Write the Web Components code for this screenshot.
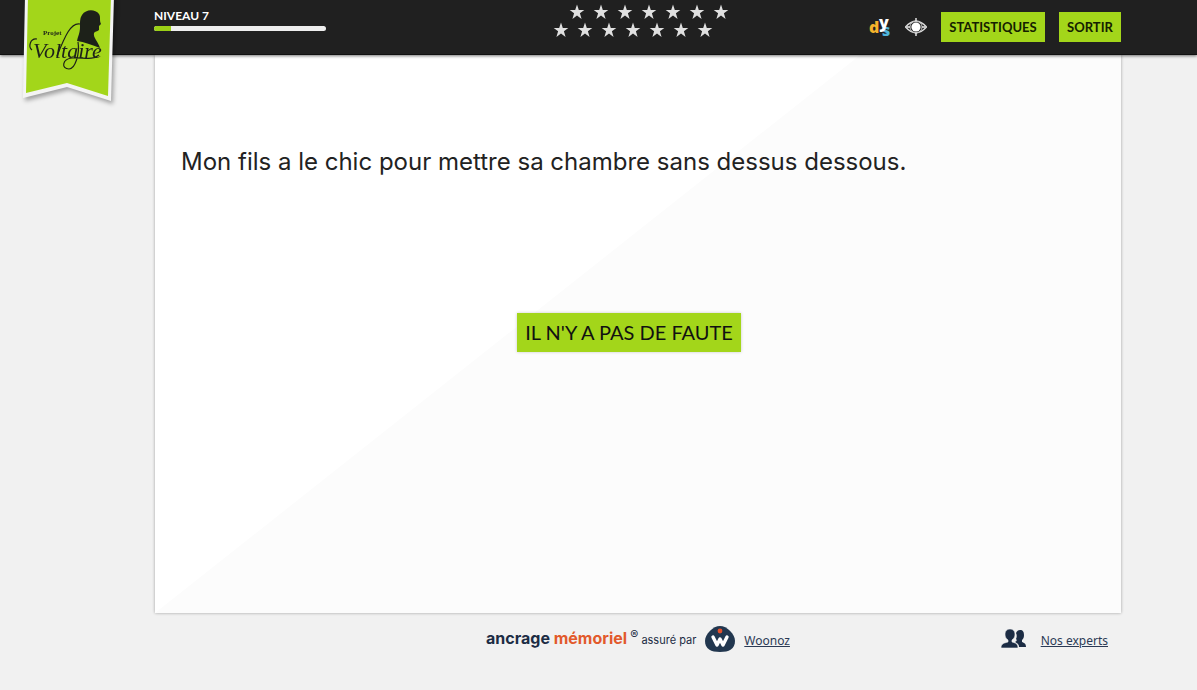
<!DOCTYPE html>
<html lang="fr">
<head>
<meta charset="utf-8">
<title>Projet Voltaire</title>
<style>
html, body { height: 100%; }
body { margin: 0; background: #f1f1f1; color: #222; font-family: Inter, "Liberation Sans", sans-serif; }
</style>
</head>
<body>
<voltaire-app></voltaire-app>
<script>
function define(name, html) {
  const template = document.createElement('template');
  template.innerHTML = html;
  customElements.define(name, class extends HTMLElement {
    constructor() {
      super();
      this.attachShadow({ mode: 'open' }).append(template.content.cloneNode(true));
    }
  });
}

define('brand-ribbon', `
<style>
:host { display: block; width: 100px; }
svg { display: block; overflow: visible; filter: drop-shadow(2px 3px 2px #0005); }
</style>
<svg width="100" height="110" viewBox="18 0 100 110" role="img" aria-label="Projet Voltaire">
  <path d="M25 -4H114L111 101L67 87L23 98Z" fill="#f4f4f4"/>
  <path d="M28 -4H111L108 96L67 83L26 93Z" fill="#a3d61a"/>
  <path d="M82 15C86 9 95 9 99 14C101 17 99 20 101 24L99 26L99 30C97 32 95 31 94 33C93 38 98 41 100 48C92 45 84 42 77 41C78 36 80 33 80 27C80 21 80 18 82 15Z" fill="#1d2119"/>
  <text x="43" y="35" font-family="Liberation Serif, serif" font-size="7" font-weight="bold" fill="#1d2119">Projet</text>
  <text x="33" y="58" font-family="Liberation Serif, serif" font-size="22" font-style="italic" fill="#1d2119">Voltaire</text>
  <path d="M37 39C30 38 28 47 32 50M80 24C71 22 65 36 57 56M78 42C80 54 75 69 69 69C61 69 62 59 72 58C83 57 92 61 99 55" fill="none" stroke="#1d2119" stroke-width="1.2"/>
</svg>`);

define('level-meter', `
<style>
:host { display: block; font: 700 12px/15px Lato, "Liberation Sans", sans-serif; color: #fff; }
label { display: block; margin-bottom: 3px; }
progress { display: block; width: 172px; height: 5px; border: 0; border-radius: 3px; overflow: hidden; appearance: none; background: #eee; }
progress::-webkit-progress-bar { background: #eee; }
progress::-webkit-progress-value { background: #9bd016; }
</style>
<label for="level"><slot></slot></label>
<progress id="level" max="100" value="10"></progress>`);

const star = '<svg viewBox="0 0 16 16" aria-hidden="true"><path d="M8 .5L9.8 6H15.3L10.9 9.3L12.6 15L8 11.6L3.4 15L5.1 9.3L.7 6H6.2Z"/></svg>';
define('star-row', `
<style>
:host { display: flex; gap: 8px; }
svg { width: 16px; height: 16px; fill: #e0e0e0; }
</style>${star.repeat(7)}`);

define('dys-toggle', `
<style>
:host { display: block; }
button { display: block; border: 0; padding: 0; background: none; overflow: visible; }
svg { display: block; overflow: visible; }
text { font: 800 16px "Open Sans", sans-serif; }
</style>
<button type="button" aria-label="Affichage dys"><svg width="24" height="24" viewBox="0 0 24 24">
<text x="0" y="18" fill="#f4b32c">d</text><text x="13" y="21" fill="#4fb5dc">s</text><text x="10" y="13" fill="#fff">y</text>
</svg></button>`);

define('eye-toggle', `
<style>
:host { display: block; }
button { display: block; border: 0; padding: 0; background: none; }
svg { display: block; }
</style>
<button type="button" aria-label="Contraste"><svg width="22" height="20" viewBox="1 0 22 20">
<path d="M1.5 10Q12 -1.5 22.5 10Q12 21.5 1.5 10Z" fill="#222" stroke="#ddd" stroke-width="1.4"/>
<circle cx="12" cy="10" r="6" fill="none" stroke="#bbb"/>
<circle cx="12" cy="10" r="4.6" fill="#fff"/><path d="M12 1V4M12 16V19M3 10H6M18 10H21" stroke="#eee" stroke-width="1.4"/>
</svg></button>`);

define('lime-button', `
<style>
:host { display: block; }
button { display: block; border: 0; padding: 0 7px; height: 30px; background: #a3d61a; color: #142000; font: 700 13px/30px Lato, "Liberation Sans", sans-serif; white-space: nowrap; min-width: 62px; }
:host([wide]) button { min-width: 104px; }
:host([size="large"]) button { height: 39px; min-width: 224px; padding: 0 8px; font-size: 20px; font-weight: 400; line-height: 39px; color: #111; box-shadow: 0 0 3px #0003; }
</style>
<button type="button"><slot></slot></button>`);

define('top-bar', `
<style>
:host { display: grid; grid-template-columns: 1fr auto 1fr; height: 55px; box-sizing: border-box; padding: 0 76px 0 154px; background: #202020; border-bottom: 1px solid #111; box-shadow: 0 1px 3px #0008; position: relative; }
level-meter { padding-top: 8px; }
.stars { width: 176px; padding: 4px 0 0 6px; display: flex; flex-direction: column; gap: 2px; }
.stars :first-child { align-self: flex-end; }
.tools { display: flex; justify-content: flex-end; align-items: center; gap: 14px; }
.icons { display: flex; align-items: center; gap: 12px; }
brand-ribbon { position: absolute; left: 18px; top: 0; }
</style>
<level-meter>NIVEAU 7</level-meter>
<div class="stars"><star-row></star-row><star-row></star-row></div>
<div class="tools"><div class="icons"><dys-toggle></dys-toggle><eye-toggle></eye-toggle></div><lime-button wide>STATISTIQUES</lime-button><lime-button>SORTIR</lime-button></div>
<brand-ribbon></brand-ribbon>`);

define('exercise-card', `
<style>
:host { display: flex; flex-direction: column; align-items: center; box-sizing: border-box; padding: 87px 44px 0 26px; background: #fff; box-shadow: 0 0 3px #0005; isolation: isolate; position: relative; }
:host::before { content: ""; position: absolute; inset: 0; z-index: -1; background: #fcfcfc; clip-path: polygon(73% 0, 100% 0, 100% 100%, 0 100%); }
p { align-self: stretch; margin: 0 0 131px; font: 400 24px/40px Inter, "Liberation Sans", sans-serif; color: #222; }
</style>
<p><slot></slot></p>
<slot name="action"></slot>`);

define('page-footer', `
<style>
:host { display: grid; grid-template-columns: 1fr auto 1fr; align-items: center; height: 28px; margin-top: 12px; color: #1c2c44; }
.credit { grid-column: 2; display: flex; align-items: center; gap: 8px; }
.claim { font-size: 11px; line-height: 24px; white-space: nowrap; }
strong { font-size: 16px; }
em { font-style: normal; color: #e2592b; }
sup { font-size: 12px; line-height: 10px; }
.experts { display: flex; justify-content: flex-end; align-items: center; gap: 14px; padding-right: 13px; }
a { color: #2b3a55; font: 12px/20px "Noto Sans", sans-serif; padding-top: 4px; }
svg { display: block; }
</style>
<div class="credit">
  <span class="claim"><strong>ancrage <em>mémoriel</em></strong> <sup>®</sup> assuré par</span>
  <svg width="32" height="28" viewBox="0 0 32 28" aria-hidden="true">
    <path d="M16 1C23 1 31 9 31 16C31 24 25 27 16 27C7 27 1 24 1 16C1 9 9 1 16 1Z" fill="#22374f"/>
    <path d="M9 12L13 20L16 14L19 20L23 12" fill="none" stroke="#fff" stroke-width="3.4" stroke-linecap="round" stroke-linejoin="round"/>
    <circle cx="16" cy="6" r="2.4" fill="#e2502c"/>
  </svg>
  <a href="#woonoz">Woonoz</a>
</div>
<div class="experts">
  <svg width="26" height="20" viewBox="0 0 26 20" aria-hidden="true" fill="#1c2c44">
    <path d="M19 1C22 1 23 3 23 6C23 9 22 10 21 11V13C23 14 25 14 25 18H18C18 15 16 14 14 13C16 12 16 11 15 10C16 8 16 6 15 4C16 2 17 1 19 1Z"/>
    <path d="M9 0C12 0 14 2 14 5C14 9 12 10 11 11V13C14 14 17 14 17 19H0C0 14 4 14 7 13V11C6 10 4 9 4 5C4 2 6 0 9 0Z" stroke="#f1f1f1" stroke-width=".6"/>
  </svg>
  <a href="#experts">Nos experts</a>
</div>`);

define('voltaire-app', `
<style>
:host { display: flex; flex-direction: column; min-height: 100%; }
main { flex: 1; display: flex; flex-direction: column; padding: 0 76px 37px 155px; }
exercise-card { flex: 1; }
top-bar { z-index: 1; }
</style>
<top-bar></top-bar>
<main>
  <exercise-card>Mon fils a le chic pour mettre sa chambre sans dessus dessous.
    <lime-button slot="action" size="large">IL N'Y A PAS DE FAUTE</lime-button>
  </exercise-card>
  <page-footer></page-footer>
</main>`);
</script>
</body>
</html>
